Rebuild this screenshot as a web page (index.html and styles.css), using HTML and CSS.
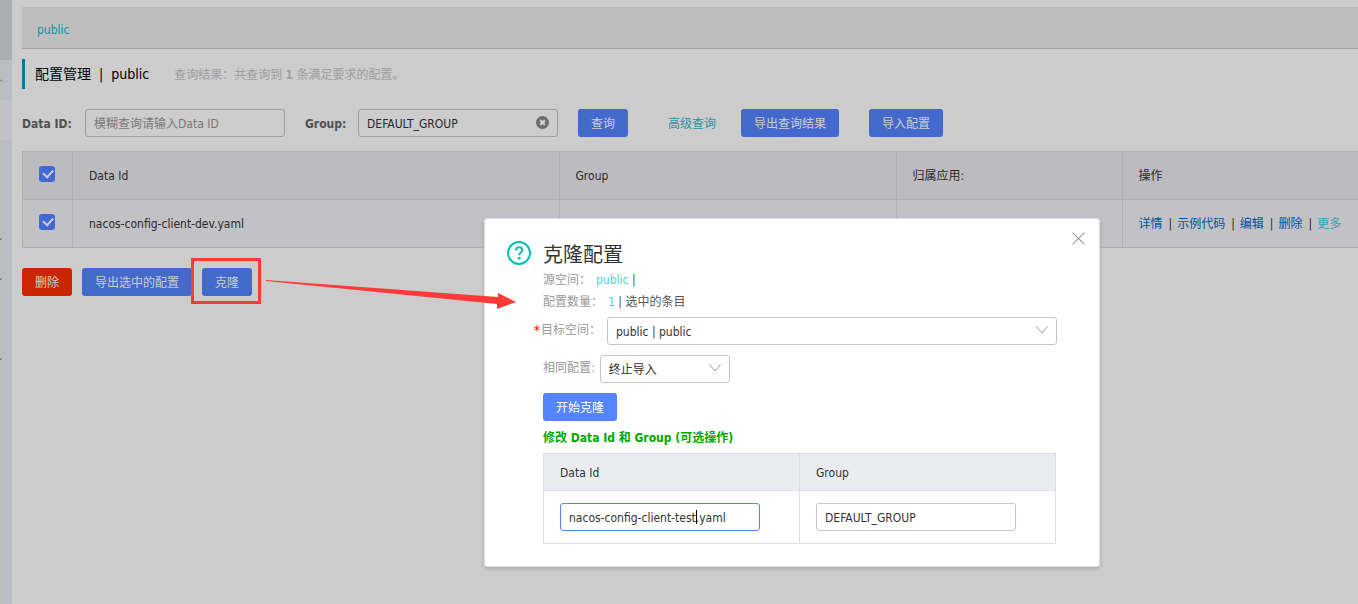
FILE: index.html
```html
<!DOCTYPE html>
<html lang="zh-CN">
<head>
<meta charset="utf-8">
<title>配置管理</title>
<link rel="stylesheet" href="styles.css">
</head>
<body>
<div class="page">
  <aside class="sidebar">
    <div class="side-head"></div>
    <div class="side-item"><svg class="side-mark" viewBox="0 0 4 6"><path d="M0 2.5L2 4.5"/></svg></div>
    <div class="side-item side-active"></div>
    <div class="side-item"></div>
    <div class="side-item"></div>
    <div class="side-item"><svg class="side-mark" viewBox="0 0 4 6"><path d="M0 3L2 1"/></svg></div>
    <div class="side-item"><svg class="side-mark" viewBox="0 0 4 6"><path d="M0 3L2 1"/></svg></div>
    <div class="side-item"></div>
    <div class="side-item"><svg class="side-mark" viewBox="0 0 4 6"><path d="M0 3L2 1"/></svg></div>
  </aside>
  <main class="main">
    <nav class="namespaces"><a class="namespace" href="#">public</a></nav>
    <header class="heading">
      <h1 class="heading-title"><span>配置管理</span><span>|</span><span>public</span></h1>
      <p class="heading-result">查询结果：共查询到 <strong>1</strong> 条满足要求的配置。</p>
    </header>
    <form class="filters">
      <label class="filter-label" for="data-id">Data ID:</label>
      <input class="input" id="data-id" type="text" placeholder="模糊查询请输入Data ID">
      <label class="filter-label filter-group" for="group">Group:</label>
      <span class="field">
        <input class="input" id="group" type="text" value="DEFAULT_GROUP">
        <button class="clear" type="button" aria-label="清除"><svg viewBox="0 0 12 12"><circle cx="6" cy="6" r="6"/><path d="M3.8 3.8l4.4 4.4M8.2 3.8L3.8 8.2"/></svg></button>
      </span>
      <button class="btn search" type="button">查询</button>
      <a class="advanced" href="#">高级查询</a>
      <button class="btn export" type="button">导出查询结果</button>
      <button class="btn" type="button">导入配置</button>
    </form>
    <table class="configs">
      <colgroup><col class="col-check"><col><col class="col-group"><col class="col-app"><col class="col-ops"></colgroup>
      <thead>
        <tr><th><input class="check" type="checkbox" checked aria-label="全选"></th><th>Data Id</th><th>Group</th><th>归属应用:</th><th>操作</th></tr>
      </thead>
      <tbody>
        <tr><td><input class="check" type="checkbox" checked aria-label="选择"></td><td>nacos-config-client-dev.yaml</td><td></td><td></td>
          <td><div class="ops"><a href="#">详情</a><i>|</i><a href="#">示例代码</a><i>|</i><a href="#">编辑</a><i>|</i><a href="#">删除</a><i>|</i><a class="more" href="#">更多</a></div></td></tr>
      </tbody>
    </table>
    <div class="actions">
      <button class="btn btn-danger" type="button">删除</button>
      <button class="btn" type="button">导出选中的配置</button>
      <button class="btn" type="button">克隆</button>
    </div>
  </main>
</div>
<div class="backdrop"></div>
<section class="dialog" role="dialog" aria-labelledby="dialog-title">
  <button class="close" type="button" aria-label="关闭"><svg viewBox="0 0 12 12"><path d="M.5 .5l11 11M11.5 .5l-11 11"/></svg></button>
  <svg class="help" viewBox="0 0 24 24"><circle cx="12" cy="12" r="11"/><path d="M8.9 9.6C8.9 7.5 10.2 6.3 12.1 6.3C13.9 6.3 15.2 7.4 15.2 9.1C15.2 11.4 12.2 11.6 12.2 14.2"/><circle class="help-dot" cx="12.2" cy="17.2" r="1.5"/></svg>
  <div class="dialog-body">
    <h2 class="dialog-title" id="dialog-title">克隆配置</h2>
    <p class="info"><span class="muted">源空间：</span><span class="info-value"><b>public</b> |</span></p>
    <p class="info"><span class="muted">配置数量：</span><span class="info-value"><b>1</b> | 选中的条目</span></p>
    <div class="row">
      <label class="muted required" for="target">目标空间：</label>
      <span class="field target-field">
        <select class="input select" id="target"><option>public | public</option></select>
        <svg class="chevron" viewBox="0 0 12 8"><path d="M.5 .5L6 7L11.5 .5"/></svg>
      </span>
    </div>
    <div class="row">
      <label class="muted" for="policy">相同配置:</label>
      <span class="field policy-field">
        <select class="input select" id="policy"><option>终止导入</option></select>
        <svg class="chevron" viewBox="0 0 12 8"><path d="M.5 .5L6 7L11.5 .5"/></svg>
      </span>
    </div>
    <button class="btn start" type="button">开始克隆</button>
    <h3 class="edit-title">修改 Data Id 和 Group (可选操作)</h3>
    <table class="clones">
      <thead><tr><th>Data Id</th><th>Group</th></tr></thead>
      <tbody><tr>
        <td><span class="field"><input class="input focused" type="text" value="nacos-config-client-test.yaml" aria-label="Data Id"><span class="caret"></span></span></td>
        <td><input class="input" type="text" value="DEFAULT_GROUP" aria-label="Group"></td>
      </tr></tbody>
    </table>
  </div>
</section>
<div class="marker"></div>
<svg class="arrow" viewBox="0 0 250 40"><path d="M0 9L232 26V22L250 31L231 38V33L0 10Z"/></svg>
</body>
</html>
```
FILE: styles.css
```css
* { box-sizing: border-box; }
body, h1, h2, h3, p { margin: 0; }
body {
  position: relative;
  min-height: 100vh;
  overflow: hidden;
  background: #fff;
  color: #333;
  font: 12px/18px "DejaVu Sans Condensed", "Noto Sans CJK SC", sans-serif;
}
button, input, select { font: inherit; color: inherit; }
a { text-decoration: none; }
svg { display: block; fill: none; }

.page { display: flex; min-height: 100vh; }
.sidebar { width: 12px; flex: none; background: #e9eef2; }
.side-head { height: 60px; background: #d5d9e0; }
.side-item { height: 40px; display: flex; align-items: center; }
.side-active { background: #f3f2f8; }
.side-mark { width: 4px; height: 6px; stroke: #777; }
.main { flex: 1; min-width: 0; padding: 7px 0 0 10px; }

.namespaces { height: 42px; padding: 14px 15px; background: #eee; border-bottom: 1px solid #c8c8c8; }
.namespace { color: #14b8d4; }
.heading { display: flex; align-items: center; gap: 25px; height: 30px; margin-top: 10px; padding-left: 10px; border-left: 3px solid #09c; }
.heading-title { display: flex; gap: 8px; font-size: 14px; font-weight: 400; color: #000; }
.heading-result { padding-top: 2px; color: #c8c8c8; }

.filters { display: flex; align-items: center; margin: 20px 0 14px; }
.filter-label { width: 63px; padding-top: 2px; font-weight: 700; color: #666; }
.filter-group { width: 53px; margin-left: 20px; }
.field { position: relative; display: flex; }
.input { width: 200px; height: 28px; padding: 1px 8px 0; border: 1px solid #c4c6cf; border-radius: 3px; background: transparent; outline: none; }
.input::placeholder { color: #999; opacity: 1; }
.clear { position: absolute; right: 9px; top: 7px; width: 13px; height: 13px; padding: 0; border: 0; background: none; }
.clear svg { fill: #888; }
.clear path { stroke: #fff; stroke-width: 2; }
.btn { height: 28px; padding: 2px 13px 0; border: 0; border-radius: 3px; background: #5584ff; color: #fff; white-space: nowrap; }
.btn-danger { background: #ff3000; }
.search { margin-left: 20px; }
.advanced { margin: 0 25px 0 40px; padding-top: 2px; color: #33b9d2; }
.export { margin-right: 30px; }

table { border-collapse: collapse; table-layout: fixed; width: 100%; }
th, td { border: 1px solid #dcdee3; padding: 0 16px; text-align: left; font-weight: 400; }
th { background: #ebecf0; }
.configs td, .configs th { height: 48px; }
.configs td { background: #f3f2f8; }
.configs th:last-child, .configs td:last-child { border-right: 0; }
.col-check { width: 50px; }
.col-group { width: 337px; }
.col-app { width: 226px; }
.col-ops { width: 236px; }
.check { appearance: none; display: block; width: 16px; height: 16px; margin: 0 0 4px; padding: 4px; border-radius: 3px; background: #5584ff; }
.check::before { content: ""; display: block; width: 8px; height: 5px; border: solid #fff; border-width: 0 0 2px 2px; transform: translateY(-1px) rotate(-48deg); }
.ops { display: flex; gap: 5px; white-space: nowrap; }
.ops a { color: #06c; }
.ops i { padding-left: 1px; font-style: normal; }
.ops .more { color: #33cde5; }
.actions { display: flex; gap: 10px; margin-top: 20px; }

.backdrop { position: absolute; inset: 0; background: rgba(0, 0, 0, .2); }
.dialog { position: absolute; left: 484px; top: 218px; display: flex; width: 616px; padding: 22px 43px 22px 22px; background: #fff; border: 1px solid #dcdee3; border-radius: 3px; box-shadow: 0 2px 4px rgba(0, 0, 0, .15); }
.close { position: absolute; right: 14px; top: 13px; width: 13px; height: 13px; padding: 0; border: 0; background: none; }
.close svg { stroke: #999; stroke-width: 1; }
.help { flex: none; width: 24px; height: 24px; stroke: #00c1b4; stroke-width: 2; }
.help .help-dot { fill: #00c1b4; stroke: none; }
.dialog-body { flex: 1; min-width: 0; padding-left: 12px; color: #333; }
.dialog-title { font-size: 20px; font-weight: 400; line-height: 28px; }
.info { display: flex; height: 22px; line-height: 22px; }
.info-value { margin-left: 5px; color: #555; }
.info-value b { font-weight: 400; color: #49d2e7; }
.muted { color: #999; white-space: nowrap; }
.row { display: flex; margin-top: 4px; line-height: 26px; }
.row + .row { margin-top: 10px; }
.required { position: relative; margin-left: -2px; }
.required::before { content: "*"; position: absolute; right: 100%; color: #f00; font-size: 14px; padding-right: 1px; }
.target-field { flex: 1; margin-left: 6px; margin-right: -1px; }
.policy-field { width: 130px; margin-left: 5px; }
.select { appearance: none; width: 100%; background: #fff; }
.chevron { position: absolute; right: 9px; top: 9px; width: 12px; height: 8px; stroke: #999; pointer-events: none; }
.start { display: block; margin-top: 10px; }
.edit-title { margin: 8px 0 6px; font-size: 12px; line-height: 18px; color: #00a800; }
.clones th { height: 37px; padding-top: 2px; }
.clones td { height: 53px; }
.clones .focused { border-color: #5584ff; }
.caret { position: absolute; left: 136px; top: 7px; width: 1px; height: 14px; background: #000; }

.marker { position: absolute; left: 191px; top: 258px; width: 70px; height: 46px; border: 3px solid #fd3a3a; }
.arrow { position: absolute; left: 266px; top: 271px; width: 250px; height: 40px; fill: #fd3a3a; }
```
